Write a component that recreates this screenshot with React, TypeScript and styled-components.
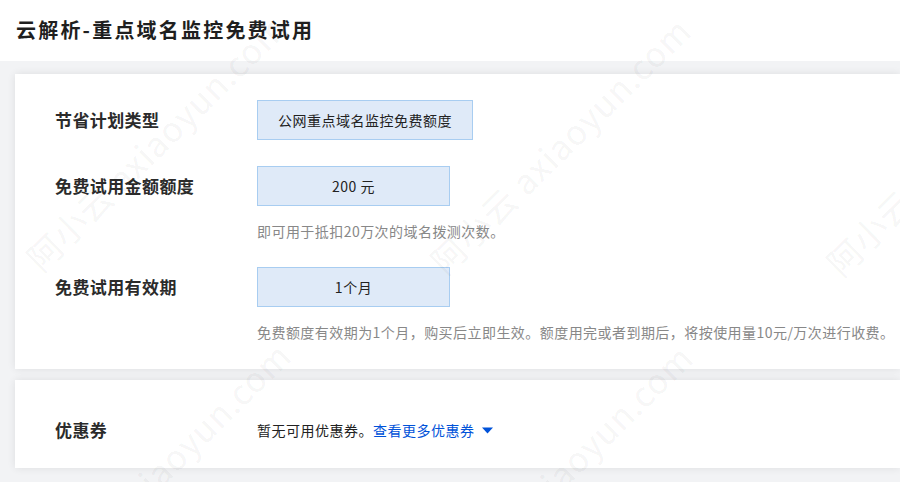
import React from "react";
import styled, { createGlobalStyle } from "styled-components";

const Global = createGlobalStyle`
  html, body {
    margin: 0;
    padding: 0;
    background: #f2f3f5;
    overflow: hidden;
  }
  * { box-sizing: border-box; }
  body {
    font-family: "Noto Sans CJK SC", "Noto Sans", "Liberation Sans", sans-serif;
    color: #333;
  }
`;

const Page = styled.div`
  position: relative;
  display: flex;
  flex-direction: column;
  width: 900px;
  height: 482px;
  background: #f2f3f5;
  overflow: hidden;
`;

const Header = styled.header`
  height: 61px;
  flex: none;
  background: #fff;
  display: flex;
  align-items: center;
  padding-left: 16px;
`;

const Title = styled.h1`
  margin: 0;
  font-size: 20px;
  font-weight: 700;
  letter-spacing: 2.2px;
  color: #1f1f1f;
  line-height: 28px;
  padding-bottom: 2px;
`;

const Main = styled.main`
  display: flex;
  flex-direction: column;
  gap: 11px;
  padding: 13px 0 0 15px;
`;

const Card = styled.section<{ $pad: string }>`
  background: #fff;
  box-shadow: 0 0 8px rgba(0, 0, 0, 0.09);
  padding: ${(p) => p.$pad};
  display: flex;
  flex-direction: column;
  gap: 26px;
`;

const Row = styled.div`
  display: grid;
  grid-template-columns: 202px 1fr;
  align-items: start;
`;

const Label = styled.div`
  font-size: 17px;
  font-weight: 700;
  letter-spacing: 0.4px;
  line-height: 40px;
  color: #2b2b2b;
`;

const Field = styled.div`
  display: flex;
  flex-direction: column;
  align-items: flex-start;
`;

const Option = styled.div<{ $w: number }>`
  width: ${(p) => p.$w}px;
  height: 40px;
  display: flex;
  align-items: center;
  justify-content: center;
  background: #dfeaf8;
  border: 1px solid #a8cdf1;
  font-size: 14px;
  letter-spacing: 0.5px;
  color: #222;
`;

const Help = styled.p`
  margin: 15px 0 0;
  font-size: 14px;
  line-height: 20px;
  letter-spacing: 0.45px;
  color: #888;
  white-space: nowrap;
`;

const Coupon = styled.div`
  display: flex;
  align-items: center;
  height: 40px;
  font-size: 14px;
  letter-spacing: 0.5px;
  color: #222;
`;

const Link = styled.a`
  color: #0052d9;
  text-decoration: none;
  cursor: pointer;
  display: inline-flex;
  align-items: center;
`;

const Caret = styled.svg`
  margin-left: 7px;
  width: 11px;
  height: 7px;
`;

const Watermarks = styled.div`
  position: absolute;
  inset: 0;
  pointer-events: none;
  overflow: hidden;
  z-index: 5;
`;

const Mark = styled.span<{ $x: number; $y: number }>`
  position: absolute;
  left: ${(p) => p.$x}px;
  top: ${(p) => p.$y - 34}px;
  font-size: 34px;
  line-height: 34px;
  font-family: "Noto Sans CJK SC", "Noto Sans", sans-serif;
  font-weight: 400;
  letter-spacing: 1px;
  white-space: nowrap;
  color: rgba(0, 0, 0, 0.055);
  transform-origin: 0 100%;
  transform: rotate(-44.5deg);
`;

const marks = [
  { x: 44, y: 276 },
  { x: 448, y: 279 },
  { x: 844, y: 281 },
  { x: 48, y: 604 },
  { x: 450, y: 606 },
];

export default function App() {
  return (
    <>
      <Global />
      <Page>
        <Header>
          <Title>云解析-重点域名监控免费试用</Title>
        </Header>
        <Main>
          <Card $pad="26px 0 27px 40px">
            <Row>
              <Label>节省计划类型</Label>
              <Field>
                <Option $w={216}>公网重点域名监控免费额度</Option>
              </Field>
            </Row>
            <Row>
              <Label>免费试用金额额度</Label>
              <Field>
                <Option $w={193}>200 元</Option>
                <Help>即可用于抵扣20万次的域名拨测次数。</Help>
              </Field>
            </Row>
            <Row>
              <Label>免费试用有效期</Label>
              <Field>
                <Option $w={193}>1个月</Option>
                <Help>
                  免费额度有效期为1个月，购买后立即生效。额度用完或者到期后，将按使用量10元/万次进行收费。
                </Help>
              </Field>
            </Row>
          </Card>
          <Card $pad="30px 0 18px 40px">
            <Row>
              <Label>优惠券</Label>
              <Coupon>
                暂无可用优惠券。
                <Link>
                  查看更多优惠券
                  <Caret viewBox="0 0 11 7">
                    <path d="M0 0.5 L11 0.5 L5.5 6.5 Z" fill="#0052d9" />
                  </Caret>
                </Link>
              </Coupon>
            </Row>
          </Card>
        </Main>
        <Watermarks>
          {marks.map((m, i) => (
            <Mark key={i} $x={m.x} $y={m.y}>
              阿小云 axiaoyun.com
            </Mark>
          ))}
        </Watermarks>
      </Page>
    </>
  );
}
